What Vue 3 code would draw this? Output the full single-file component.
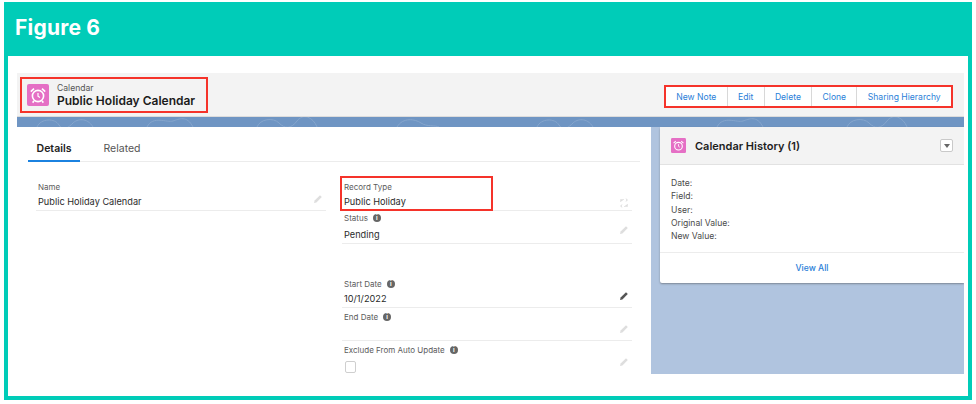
<script setup>
const tabs = ['Details', 'Related']
const actions = ['New Note', 'Edit', 'Delete', 'Clone', 'Sharing Hierarchy']
const historyRows = ['Date:', 'Field:', 'User:', 'Original Value:', 'New Value:']
</script>

<template>
  <div class="figure">
    <div class="figureTitle">Figure 6</div>
    <div class="figureBody">
      <div class="record">
        <header class="recordHeader">
          <div class="recordName">
            <svg class="calIcon" viewBox="0 0 22 22">
              <rect width="22" height="22" rx="2" fill="#e56fc5" />
              <circle cx="11" cy="12" r="5.6" fill="none" stroke="#fff" stroke-width="1.6" />
              <path d="M11 9v3.2l2 1.3" fill="none" stroke="#fff" stroke-width="1.2" />
              <path d="M3.8 7.6 7 4.6M18.2 7.6 15 4.6M7 17l-1.4 1.6M15 17l1.4 1.6" fill="none" stroke="#fff" stroke-width="1.6" />
            </svg>
            <div>
              <div class="objectName">Calendar</div>
              <div class="recordTitle">Public Holiday Calendar</div>
            </div>
          </div>
          <div class="actions">
            <button v-for="action in actions" :key="action" class="action">{{ action }}</button>
          </div>
        </header>

        <div class="band">
          <svg width="947" height="10" viewBox="0 0 947 10">
            <g fill="none" stroke="#86a6cd" stroke-width="1">
              <path d="M20 10c4-9 18-9 22-2s10 2 14-2 14-6 20 4" />
              <path d="M130 10c6-12 20-4 26-6s14-6 20 6" />
              <path d="M240 10c3-8 16-10 22-4s12 6 18-2 16-4 20 6" />
              <path d="M380 10c6-10 18-8 24-4s14 2 18 4" />
              <path d="M520 10c4-9 18-9 22-2s10 2 14-2 14-6 20 4" />
              <path d="M700 10c6-12 20-4 26-6s14-6 20 6" />
              <path d="M830 10c3-8 16-10 22-4s12 6 18-2 16-4 20 6" />
            </g>
          </svg>
        </div>

        <div class="content">
          <section class="detailCard">
            <div class="tabs">
              <div v-for="(tab, i) in tabs" :key="tab" class="tab" :class="{ active: i === 0 }">{{ tab }}</div>
            </div>
            <div class="columns">
              <div class="column">
                <div class="field">
                  <div class="label">Name</div>
                  <div class="value">Public Holiday Calendar</div>
                  <svg class="pencil" viewBox="0 0 10 10"><path d="M1 9l.6-2.4L7 1.2 8.8 3 3.4 8.4z" /></svg>
                </div>
              </div>

              <div class="column">
                <div class="field recordType">
                  <div class="label">Record Type</div>
                  <div class="value">Public Holiday</div>
                  <svg class="swap" viewBox="0 0 10 10" fill="none" stroke="#e6e6e6" stroke-width="1">
                    <path d="M1.5 4V1.5H5M8.5 6v2.5H5M7 .5l1.5 1.5L7 3.5M3 6.500 1.5 8 3 9.5" />
                  </svg>
                  <div class="redBox"></div>
                </div>
                <div class="field status">
                  <div class="label">Status <span class="info">i</span></div>
                  <div class="value">Pending</div>
                  <svg class="pencil" viewBox="0 0 10 10"><path d="M1 9l.6-2.4L7 1.2 8.8 3 3.4 8.4z" /></svg>
                </div>
                <div class="field">
                  <div class="label">Start Date <span class="info">i</span></div>
                  <div class="value">10/1/2022</div>
                  <svg class="pencil dark" viewBox="0 0 10 10"><path d="M1 9l.6-2.4L7 1.2 8.8 3 3.4 8.4z" /></svg>
                </div>
                <div class="field">
                  <div class="label">End Date <span class="info">i</span></div>
                  <div class="value">&nbsp;</div>
                  <svg class="pencil" viewBox="0 0 10 10"><path d="M1 9l.6-2.4L7 1.2 8.8 3 3.4 8.4z" /></svg>
                </div>
                <div class="field last">
                  <div class="label">Exclude From Auto Update <span class="info">i</span></div>
                  <div class="checkbox"></div>
                  <svg class="pencil" viewBox="0 0 10 10"><path d="M1 9l.6-2.4L7 1.2 8.8 3 3.4 8.4z" /></svg>
                </div>
              </div>
            </div>
          </section>

          <aside class="side">
            <div class="historyCard">
              <div class="historyHead">
                <svg class="calIcon small" viewBox="0 0 22 22">
                  <rect width="22" height="22" rx="2" fill="#e56fc5" />
                  <circle cx="11" cy="12" r="5.6" fill="none" stroke="#fff" stroke-width="1.6" />
                  <path d="M11 9v3.2l2 1.3" fill="none" stroke="#fff" stroke-width="1.2" />
                  <path d="M3.8 7.6 7 4.6M18.2 7.6 15 4.6" fill="none" stroke="#fff" stroke-width="1.6" />
                </svg>
                <span class="historyTitle">Calendar History (1)</span>
                <span class="menuBtn"><i></i></span>
              </div>
              <div class="historyBody">
                <div v-for="row in historyRows" :key="row" class="historyRow">{{ row }}</div>
              </div>
              <div class="viewAll">View All</div>
            </div>
          </aside>
        </div>
      </div>
    </div>
  </div>
</template>

<style>
html, body {
  margin: 0;
  background: #fff;
}
</style>

<style scoped>
.figure {
  box-sizing: border-box;
  width: 968px;
  height: 398px;
  margin: 2px 0 0 4px;
  background: #00ccb8;
  padding: 0 4px 4px;
  display: flex;
  flex-direction: column;
  font-family: Inter, "Liberation Sans", sans-serif;
}
.figureTitle {
  height: 54px;
  flex: none;
  box-sizing: border-box;
  padding: 13px 0 0 7px;
  color: #fff;
  font-size: 21px;
  line-height: 26px;
  font-weight: 700;
  letter-spacing: 0.2px;
}
.figureBody {
  flex: 1;
  background: #fff;
  padding: 17px 4px 0 9px;
}
.record {
  height: 301px;
  display: flex;
  flex-direction: column;
  overflow: hidden;
}
.recordHeader {
  height: 44px;
  flex: none;
  box-sizing: border-box;
  background: #f3f3f3;
  border-bottom: 1px solid #dcdcdc;
  display: flex;
  justify-content: space-between;
  padding: 4px 11px 0 3px;
}
.recordName {
  box-sizing: border-box;
  width: 188px;
  height: 36px;
  border: 2px solid #f5332a;
  display: flex;
  align-items: center;
  gap: 8px;
  padding-left: 5px;
}
.calIcon {
  width: 22px;
  height: 22px;
  flex: none;
}
.calIcon.small {
  width: 15px;
  height: 15px;
}
.objectName {
  font-size: 8.6px;
  line-height: 11px;
  color: #555;
}
.recordTitle {
  font-size: 12px;
  line-height: 14px;
  font-weight: 600;
  color: #1b1b1b;
  white-space: nowrap;
}
.actions {
  display: flex;
  align-items: stretch;
  height: 23px;
  margin-top: 8px;
  box-sizing: border-box;
  border: 2px solid #f5332a;
  background: #fff;
}
.action {
  border: 0;
  border-left: 1px solid #d8d8d8;
  background: #fff;
  color: #2a80d8;
  font-family: inherit;
  font-size: 8.6px;
  padding: 0 10.3px;
  white-space: nowrap;
}
.action:first-child {
  border-left: 0;
}
.band {
  height: 10px;
  flex: none;
  background: #6f95c3;
  line-height: 0;
}
.content {
  flex: 1;
  display: flex;
  min-height: 0;
}
.detailCard {
  width: 634px;
  flex: none;
  box-sizing: border-box;
  background: #fff;
  padding: 12px 11px 0;
}
.tabs {
  display: flex;
  height: 22px;
  border-bottom: 1px solid #ececec;
}
.tab {
  width: 52px;
  margin-right: 16px;
  box-sizing: border-box;
  height: 23px;
  text-align: center;
  font-size: 10.5px;
  line-height: 19px;
  color: #555;
}
.tab.active {
  font-weight: 600;
  color: #222;
  border-bottom: 2px solid #1b82e0;
}
.columns {
  display: flex;
  gap: 16px;
  padding: 20px 8px 0;
}
.column {
  width: 290px;
}
.field {
  position: relative;
  height: 29px;
  box-sizing: border-box;
  padding-left: 2px;
  border-bottom: 1px solid #ececec;
  margin-bottom: 4px;
}
.recordType {
  margin-bottom: 2px;
}
.status {
  height: 31px;
  margin-bottom: 35px;
}
.status .value {
  margin-top: 4.5px;
}
.last {
  border-bottom: 0;
}
.label {
  font-size: 8px;
  line-height: 10px;
  color: #5c5c5c;
  display: flex;
  align-items: center;
  gap: 5px;
}
.value {
  font-size: 9.2px;
  line-height: 13px;
  margin-top: 3px;
  color: #2b2b2b;
}
.info {
  width: 8px;
  height: 8px;
  border-radius: 50%;
  background: #666;
  color: #fff;
  font-size: 6px;
  line-height: 8px;
  font-weight: 700;
  text-align: center;
}
.pencil, .swap {
  position: absolute;
  right: 3px;
  top: 12px;
  width: 10px;
  height: 10px;
  fill: #dedede;
}
.swap {
  top: 16px;
}
.pencil.dark {
  fill: #555;
}
.checkbox {
  box-sizing: border-box;
  width: 11px;
  height: 12px;
  margin: 6px 0 0 1px;
  border: 1px solid #cfcfcf;
  border-radius: 2px;
}
.redBox {
  position: absolute;
  left: -2px;
  top: -6px;
  width: 153px;
  height: 35px;
  box-sizing: border-box;
  border: 2px solid #f5332a;
}
.side {
  flex: 1;
  background: #b0c4df;
  padding-left: 9px;
}
.historyCard {
  height: 156px;
  background: #fff;
  box-shadow: 0 1px 2px rgba(60, 60, 60, 0.45);
  border-radius: 2px 0 0 2px;
  display: flex;
  flex-direction: column;
}
.historyHead {
  height: 38px;
  flex: none;
  box-sizing: border-box;
  background: #f3f3f3;
  border-bottom: 1px solid #e2e2e2;
  display: flex;
  align-items: center;
  padding: 0 11px;
}
.historyTitle {
  margin-left: 9px;
  font-size: 11px;
  font-weight: 600;
  color: #1d1d1d;
  flex: 1;
}
.menuBtn {
  width: 13px;
  height: 13px;
  box-sizing: border-box;
  border: 1px solid #c9c9c9;
  border-radius: 2px;
  background: #fff;
  display: flex;
  align-items: center;
  justify-content: center;
}
.menuBtn i {
  border-left: 3.5px solid transparent;
  border-right: 3.5px solid transparent;
  border-top: 4px solid #666;
}
.historyBody {
  flex: 1;
  padding: 12px 11px 0;
}
.historyRow {
  font-size: 8.6px;
  line-height: 13.3px;
  color: #4a4a4a;
}
.viewAll {
  height: 30px;
  flex: none;
  border-top: 1px solid #ececec;
  text-align: center;
  font-size: 8.6px;
  line-height: 30px;
  font-weight: 500;
  color: #2a80d8;
}
</style>
